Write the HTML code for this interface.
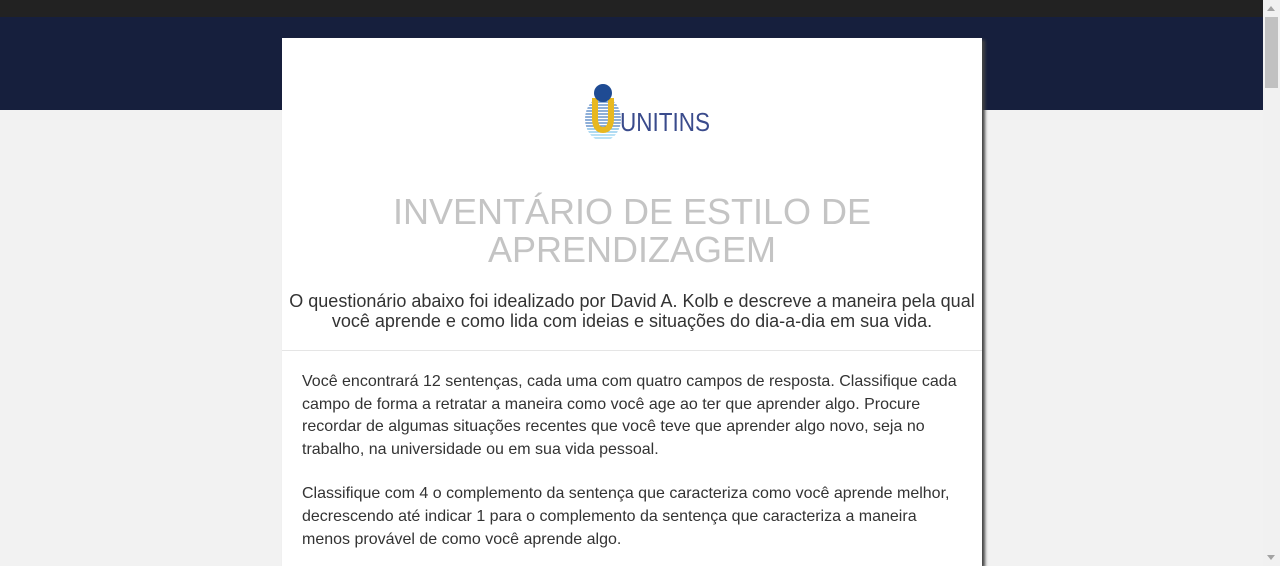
<!DOCTYPE html><html><head><style>
html,body{margin:0;width:1280px;height:566px;overflow:hidden}
body{background:#f2f2f2;font-family:"Liberation Sans",Arial,sans-serif;position:relative}
.top{position:absolute;left:0;top:0;width:1263px;height:17px;background:#222}
.nav{position:absolute;left:0;top:17px;width:1263px;height:93px;background:#161f3d}
.sb{position:absolute;right:0;top:0;width:17px;height:566px;background:#f1f1f1}
.thumb{position:absolute;right:2px;top:17px;width:13px;height:71px;background:#c1c1c1}
.card{position:absolute;left:282px;top:38px;width:700px;height:528px;background:#fff;box-shadow:3px 2px 3px #444}
h1{margin:0;position:absolute;top:155px;left:0;width:700px;text-align:center;font-weight:normal;font-size:36px;line-height:38px;color:#c4c4c4}
.sub{position:absolute;top:253px;left:0;width:700px;text-align:center;font-size:18px;line-height:20px;color:#333}
.hr{position:absolute;top:312px;left:0;width:700px;height:1px;background:#e5e5e5}
.body{position:absolute;top:333px;left:20px;width:665px;font-size:16px;line-height:22.6px;color:#333}
p{margin:0 0 22px}
</style></head><body>
<div class="top"></div><div class="nav"></div>
<div class="sb"><div class="thumb"></div><div style="position:absolute;left:4px;top:6px;border:4px solid transparent;border-bottom:5px solid #a3a3a3;border-top:0"></div><div style="position:absolute;left:4px;top:555px;border:4px solid transparent;border-top:5px solid #a3a3a3;border-bottom:0"></div></div>
<div class="card">
<svg style="position:absolute;left:300px;top:44px" width="135" height="62" viewBox="0 0 135 62">
<defs><clipPath id="c"><ellipse cx="21" cy="37" rx="18" ry="22"/></clipPath></defs>
<g clip-path="url(#c)" stroke="#4a7fc0" stroke-width="1.3">
<line x1="0" y1="20" x2="42" y2="20"/><line x1="0" y1="23" x2="42" y2="23"/><line x1="0" y1="26" x2="42" y2="26"/><line x1="0" y1="29" x2="42" y2="29"/><line x1="0" y1="32" x2="42" y2="32"/><line x1="0" y1="35" x2="42" y2="35"/><line x1="0" y1="38" x2="42" y2="38"/><line x1="0" y1="41" x2="42" y2="41"/><line x1="0" y1="44" x2="42" y2="44"/><line x1="0" y1="47" x2="42" y2="47" stroke="#6ab0e0"/><line x1="0" y1="50" x2="42" y2="50" stroke="#7fc4ea"/><line x1="0" y1="53" x2="42" y2="53" stroke="#8fd0f0"/><line x1="0" y1="56" x2="42" y2="56" stroke="#8fd0f0"/></g>
<path d="M13 16 V36 Q13 48 21 48 Q29 48 29 36 V16" fill="none" stroke="#e8b820" stroke-width="6"/>
<circle cx="21" cy="11" r="9" fill="#1f4b93"/>
<text x="38" y="49" font-family="Liberation Sans,Arial,sans-serif" font-size="26" fill="#3a4b8c" textLength="90" lengthAdjust="spacingAndGlyphs">UNITINS</text>
</svg>
<h1>INVENTÁRIO DE ESTILO DE<br>APRENDIZAGEM</h1>
<div class="sub">O questionário abaixo foi idealizado por David A. Kolb e descreve a maneira pela qual você aprende e como lida com ideias e situações do dia-a-dia em sua vida.</div>
<div class="hr"></div>
<div class="body"><p>Você encontrará 12 sentenças, cada uma com quatro campos de resposta. Classifique cada campo de forma a retratar a maneira como você age ao ter que aprender algo. Procure recordar de algumas situações recentes que você teve que aprender algo novo, seja no trabalho, na universidade ou em sua vida pessoal.</p>
<p>Classifique com 4 o complemento da sentença que caracteriza como você aprende melhor, decrescendo até indicar 1 para o complemento da sentença que caracteriza a maneira menos provável de como você aprende algo.</p></div>
</div>
</body></html>
